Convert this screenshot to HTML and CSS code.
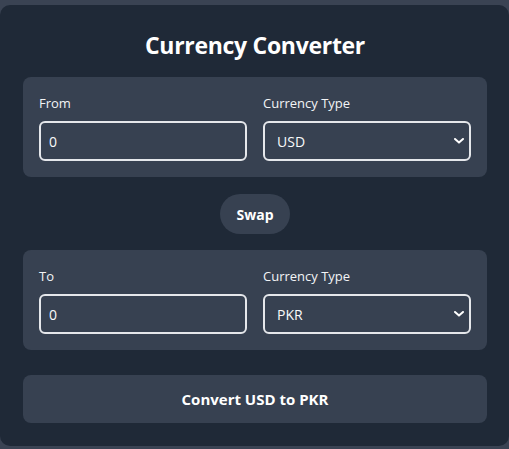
FILE: index.html
```html
<!DOCTYPE html>
<html>
<head>
<meta charset="utf-8">
<link rel="stylesheet" href="styles.css">
</head>
<body>
<div class="card">
  <h1 class="title">Currency Converter</h1>
  <div class="panel">
    <div class="field">
      <label class="label">From</label>
      <input class="input" type="text" value="0">
    </div>
    <div class="field">
      <label class="label">Currency Type</label>
      <div class="select-wrap">
        <select class="select"><option>USD</option></select>
        <svg class="chev" width="10" height="6" viewBox="0 0 10 6"><path d="M1 1 L5 4.6 L9 1" fill="none" stroke="#fff" stroke-width="2" stroke-linecap="round" stroke-linejoin="round"/></svg>
      </div>
    </div>
  </div>
  <div class="swap-row"><button class="swap">Swap</button></div>
  <div class="panel">
    <div class="field">
      <label class="label">To</label>
      <input class="input" type="text" value="0">
    </div>
    <div class="field">
      <label class="label">Currency Type</label>
      <div class="select-wrap">
        <select class="select"><option>PKR</option></select>
        <svg class="chev" width="10" height="6" viewBox="0 0 10 6"><path d="M1 1 L5 4.6 L9 1" fill="none" stroke="#fff" stroke-width="2" stroke-linecap="round" stroke-linejoin="round"/></svg>
      </div>
    </div>
  </div>
  <button class="convert">Convert USD to PKR</button>
</div>
</body>
</html>
```
FILE: styles.css
```css
* { box-sizing: border-box; }
html, body { margin: 0; padding: 0; }
body {
  background: #3a4353;
  font-family: "Open Sans", "Noto Sans", sans-serif;
  color: #f3f4f6;
  height: 449px;
  overflow: hidden;
}
.card {
  margin-top: 5px;
  height: 441px;
  background: #1f2937;
  border-radius: 10px;
  padding: 24px 22px 0 23px;
  display: flex;
  flex-direction: column;
}
.title {
  margin: 0 0 16px;
  text-align: center;
  font-size: 23px;
  line-height: 32px;
  font-weight: 700;
  color: #ffffff;
  letter-spacing: -0.3px;
}
.panel {
  background: #374151;
  border-radius: 8px;
  padding: 16px;
  display: grid;
  grid-template-columns: 1fr 1fr;
  gap: 16px;
}
.field { display: flex; flex-direction: column; }
.label {
  font-size: 13px;
  line-height: 20px;
  margin-bottom: 8px;
  color: #f3f4f6;
}
.input, .select {
  height: 40px;
  border: 2px solid #e5e7eb;
  border-radius: 6px;
  background: #374151;
  color: #f9fafb;
  font-family: inherit;
  font-size: 14px;
  padding: 0 8px;
  outline: none;
  width: 100%;
}
.select-wrap { position: relative; }
.select {
  appearance: none;
  -webkit-appearance: none;
  padding: 0 12px;
}
.chev {
  position: absolute;
  right: 7px;
  top: 17px;
  pointer-events: none;
}
.swap-row {
  display: flex;
  justify-content: center;
  padding: 17px 0 16px;
}
.swap {
  width: 70px;
  height: 40px;
  border: none;
  border-radius: 20px;
  background: #374151;
  color: #ffffff;
  font-family: inherit;
  font-weight: 700;
  font-size: 14px;
}
.convert {
  margin-top: 25px;
  height: 48px;
  border: none;
  border-radius: 8px;
  background: #374151;
  color: #ffffff;
  font-family: inherit;
  font-weight: 700;
  font-size: 15px;
  width: 100%;
}
```
